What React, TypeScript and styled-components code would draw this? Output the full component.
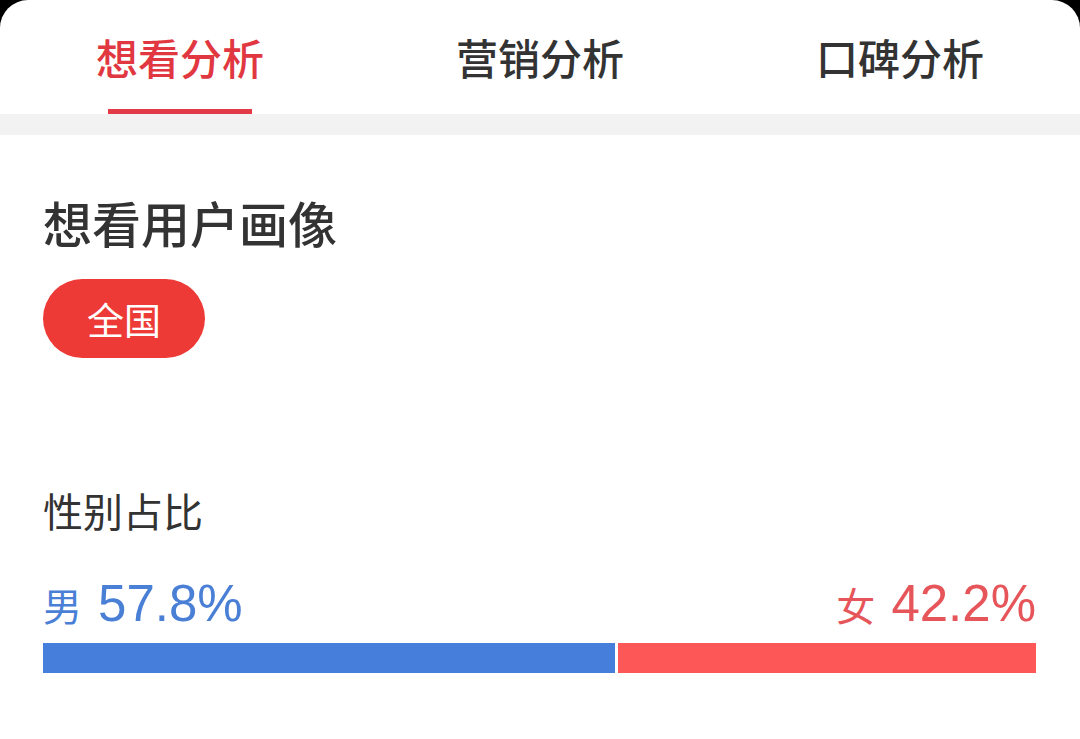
import React from "react";
import styled, { createGlobalStyle } from "styled-components";

const GlobalStyle = createGlobalStyle`
  html, body { margin: 0; padding: 0; background: #000; }
  body { font-family: "Noto Sans CJK SC", "Noto Sans", sans-serif; }
  * { box-sizing: border-box; }
`;

const Screen = styled.div`
  width: 1080px;
  height: 739px;
  background: #fff;
  border-radius: 28px 28px 0 0;
  overflow: hidden;
  display: flex;
  flex-direction: column;
`;

const TabBar = styled.div`
  display: flex;
  height: 114px;
`;

const Tab = styled.div`
  flex: 1;
  display: flex;
  flex-direction: column;
  align-items: center;
  padding-top: 36px;
`;

const TabLabel = styled.span<{ $active?: boolean }>`
  font-size: 42px;
  line-height: 42px;
  font-weight: 500;
  color: ${(p) => (p.$active ? "#e13741" : "#333")};
  margin-bottom: 31px;
`;

const Underline = styled.div<{ $active?: boolean }>`
  width: 144px;
  height: 5px;
  background: ${(p) => (p.$active ? "#e23a46" : "transparent")};
`;

const Divider = styled.div`
  height: 21px;
  background: #f2f2f2;
`;

const Section = styled.div`
  padding: 62px 44px 0 43px;
  display: flex;
  flex-direction: column;
  align-items: flex-start;
`;

const Title = styled.h2`
  margin: 0;
  font-size: 49px;
  line-height: 49px;
  font-weight: 500;
  color: #333;
`;

const Pill = styled.div`
  margin-top: 33px;
  height: 79px;
  width: 162px;
  border-radius: 40px;
  background: #ee3a36;
  color: #fff;
  font-size: 37px;
  display: flex;
  align-items: center;
  justify-content: center;
`;

const SubTitle = styled.h3`
  margin: 132px 0 0;
  font-size: 40px;
  line-height: 40px;
  font-weight: 400;
  color: #333;
`;

const StatRow = styled.div`
  margin-top: 49px;
  width: 100%;
  display: flex;
  justify-content: space-between;
  align-items: baseline;
`;

const Stat = styled.div<{ $color: string }>`
  display: flex;
  align-items: baseline;
  color: ${(p) => p.$color};
  font-family: "Liberation Sans", "Noto Sans CJK SC", sans-serif;
`;

const StatLabel = styled.span`
  font-family: "Noto Sans CJK SC", sans-serif;
  font-size: 39px;
  margin-right: 16px;
  line-height: 50px;
`;

const StatValue = styled.span`
  font-size: 51px;
  line-height: 50px;
`;

const Bar = styled.div`
  margin-top: 14px;
  width: 100%;
  height: 30px;
  display: flex;
  gap: 3px;
`;

const Segment = styled.div<{ $color: string }>`
  height: 100%;
  background: ${(p) => p.$color};
`;

const tabs = ["想看分析", "营销分析", "口碑分析"];
const male = 57.8;
const female = 42.2;

export default function App() {
  return (
    <>
      <GlobalStyle />
      <Screen>
        <TabBar>
          {tabs.map((t, i) => (
            <Tab key={t}>
              <TabLabel $active={i === 0}>{t}</TabLabel>
              <Underline $active={i === 0} />
            </Tab>
          ))}
        </TabBar>
        <Divider />
        <Section>
          <Title>想看用户画像</Title>
          <Pill>全国</Pill>
          <SubTitle>性别占比</SubTitle>
          <StatRow>
            <Stat $color="#4a7fd6">
              <StatLabel>男</StatLabel>
              <StatValue>{male}%</StatValue>
            </Stat>
            <Stat $color="#e6555a">
              <StatLabel>女</StatLabel>
              <StatValue>{female}%</StatValue>
            </Stat>
          </StatRow>
          <Bar>
            <Segment $color="#467edb" style={{ flex: male }} />
            <Segment $color="#fe5757" style={{ flex: female }} />
          </Bar>
        </Section>
      </Screen>
    </>
  );
}
